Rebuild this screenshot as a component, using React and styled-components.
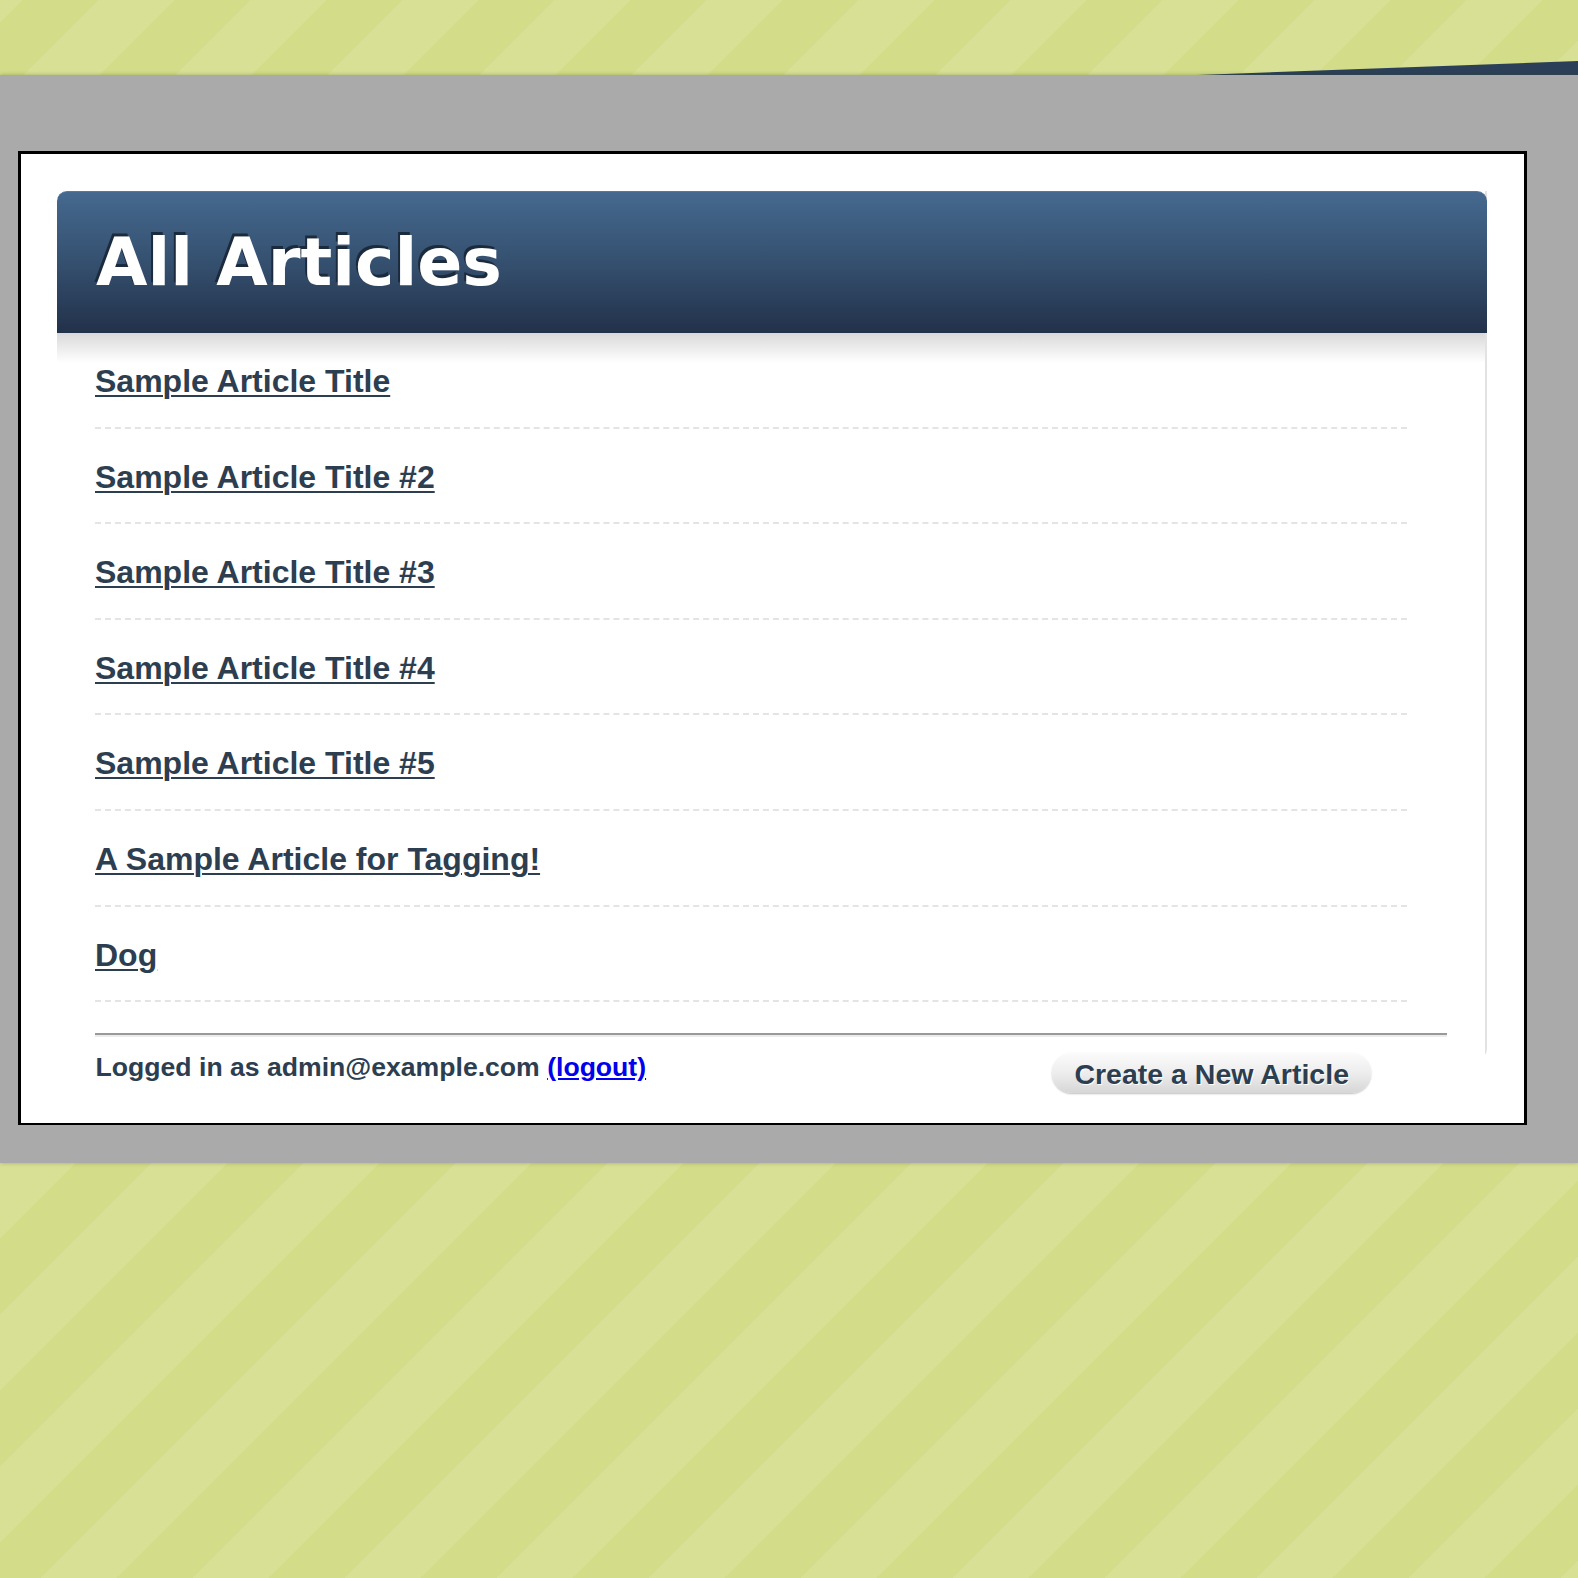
import React from 'react';
import styled, { createGlobalStyle } from 'styled-components';

const GlobalStyle = createGlobalStyle`
  html, body {
    margin: 0;
    padding: 0;
  }
  body {
    min-height: 100vh;
    font-family: "Liberation Sans", Arial, sans-serif;
    background: repeating-linear-gradient(
      135deg,
      #d8e096 0px,
      #d8e096 15.6px,
      #d3dc88 15.6px,
      #d3dc88 69.3px,
      #d8e096 69.3px,
      #d8e096 107.5px
    );
  }
`;

const Page = styled.div`
  min-height: 100vh;
`;

const TopBand = styled.div`
  position: relative;
  height: 75px;
`;

const Ribbon = styled.div`
  position: absolute;
  right: 0;
  bottom: 0;
  width: 381px;
  height: 14px;
  background: #2b4058;
  clip-path: polygon(0 100%, 100% 0, 100% 100%);
`;

const Stage = styled.div`
  position: relative;
  background: #aaaaaa;
  padding: 76px 51px 38px 18px;
  box-shadow: 0 0 4px rgba(60, 70, 20, 0.35);
`;

const Card = styled.div`
  background: #fff;
  border: solid #000;
  border-width: 3px 3px 2px 3px;
  padding: 37px 37px 30px 36px;
`;

const Panel = styled.div`
  border-right: 2px solid #e2e2e2;
  border-bottom-right-radius: 10px;
`;

const Header = styled.div`
  background: linear-gradient(to bottom, #45698f 0%, #35506f 50%, #22314a 100%);
  border-top: 1px solid #56789d;
  border-radius: 10px 10px 0 0;
  margin-right: -2px;
  padding: 32px 39px 33px;
  height: 76px;
`;

const Title = styled.h1`
  margin: 0;
  font-family: "DejaVu Sans", Verdana, sans-serif;
  font-weight: bold;
  font-size: 66.5px;
  line-height: 76px;
  color: #fff;
  text-shadow: -2px -3px 0 #1b2a3c;
`;

const Body = styled.div`
  background: linear-gradient(to bottom, #d9d9d9 0px, #ffffff 30px) no-repeat;
  padding: 0 38px 22px;
`;

const List = styled.ul`
  list-style: none;
  margin: 0 40px 0 0;
  padding: 0;
`;

const Item = styled.li`
  padding: 30px 0 27.6px;
  border-bottom: 2px dashed #e4e4e4;
  font-size: 32px;
  line-height: 36px;
  height: 36px;
`;

const ArticleLink = styled.a`
  font-weight: bold;
  color: #2c3e50;
  text-decoration: underline;
  text-decoration-thickness: 2px;
  text-underline-offset: 3px;
`;

const Rule = styled.hr`
  margin: 31px 0 0;
  height: 0;
  border: none;
  border-top: 2px solid #999;
  border-bottom: 2px solid #ececec;
`;

const Footer = styled.div`
  display: flex;
  justify-content: space-between;
  align-items: flex-start;
  margin-top: -7px;
  padding: 0 116px 0 38.6px;
`;

const Status = styled.p`
  margin: 0;
  font-size: 26.6px;
  line-height: 30px;
  font-weight: bold;
  color: #2c3e50;
`;

const Logout = styled.a`
  color: #0000ee;
  text-decoration: underline;
`;

const NewButton = styled.button`
  font-family: "Liberation Sans", Arial, sans-serif;
  font-size: 28.5px;
  font-weight: bold;
  color: #2c3e50;
  text-shadow: 1px 1px 0 #fff;
  height: 40.5px;
  line-height: 37px;
  padding: 3px 22px 0;
  margin-top: 0.7px;
  border: none;
  border-radius: 21px;
  background: linear-gradient(to bottom, #fbfbfb 0%, #ededed 50%, #d6d6d6 100%);
  box-shadow: 0 1px 2px rgba(0, 0, 0, 0.25);
  cursor: pointer;
`;

const articles = [
  'Sample Article Title',
  'Sample Article Title #2',
  'Sample Article Title #3',
  'Sample Article Title #4',
  'Sample Article Title #5',
  'A Sample Article for Tagging!',
  'Dog',
];

export default function App() {
  return (
    <Page>
      <GlobalStyle />
      <TopBand>
        <Ribbon />
      </TopBand>
      <Stage>
        <Card>
          <Panel>
            <Header>
              <Title>All Articles</Title>
            </Header>
            <Body>
              <List>
                {articles.map((title) => (
                  <Item key={title}>
                    <ArticleLink href="#">{title}</ArticleLink>
                  </Item>
                ))}
              </List>
              <Rule />
            </Body>
          </Panel>
          <Footer>
            <Status>
              Logged in as admin@example.com <Logout href="#">(logout)</Logout>
            </Status>
            <NewButton>Create a New Article</NewButton>
          </Footer>
        </Card>
      </Stage>
    </Page>
  );
}
